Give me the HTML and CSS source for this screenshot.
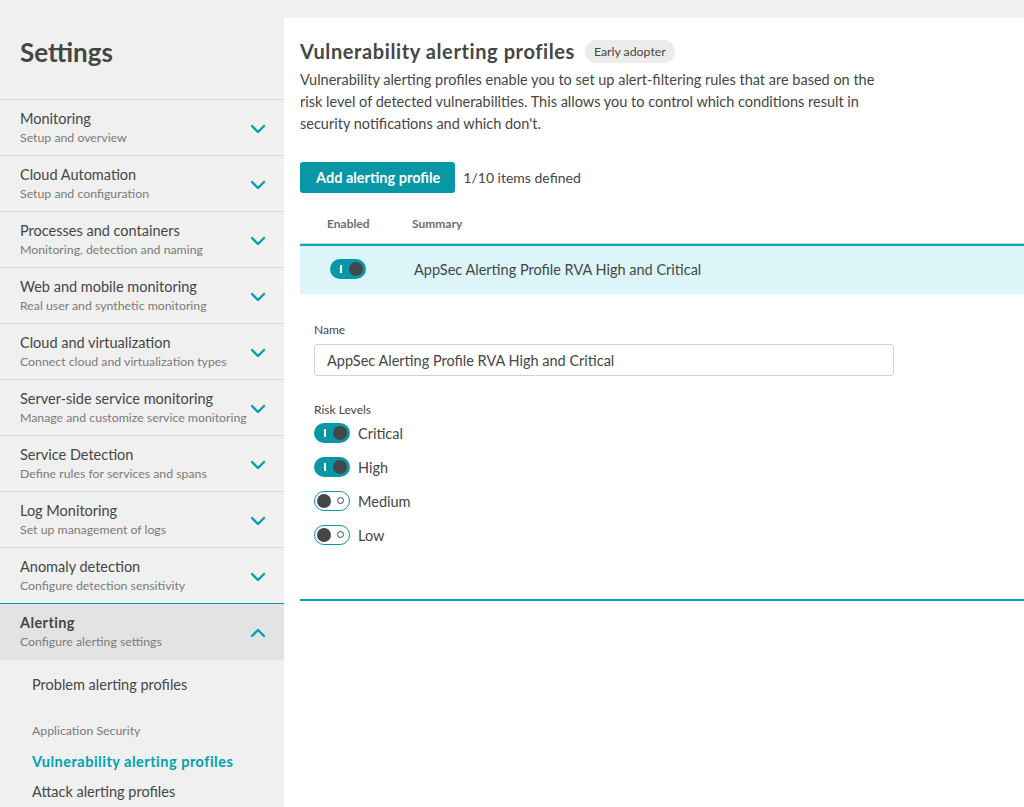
FILE: index.html
```html
<!DOCTYPE html>
<html>
<head>
<meta charset="utf-8">
<link rel="stylesheet" href="styles.css">
</head>
<body>
<div class="app">
  <aside class="sidebar">
    <h1 class="side-title">Settings</h1>
    <nav class="nav">
      <div class="nav-item"><div class="nav-text"><div class="nav-name">Monitoring</div><div class="nav-sub">Setup and overview</div></div><svg class="chev" viewBox="0 0 16 10"><path d="M2 2 L8 8 L14 2"/></svg></div>
      <div class="nav-item"><div class="nav-text"><div class="nav-name">Cloud Automation</div><div class="nav-sub">Setup and configuration</div></div><svg class="chev" viewBox="0 0 16 10"><path d="M2 2 L8 8 L14 2"/></svg></div>
      <div class="nav-item"><div class="nav-text"><div class="nav-name">Processes and containers</div><div class="nav-sub">Monitoring, detection and naming</div></div><svg class="chev" viewBox="0 0 16 10"><path d="M2 2 L8 8 L14 2"/></svg></div>
      <div class="nav-item"><div class="nav-text"><div class="nav-name">Web and mobile monitoring</div><div class="nav-sub">Real user and synthetic monitoring</div></div><svg class="chev" viewBox="0 0 16 10"><path d="M2 2 L8 8 L14 2"/></svg></div>
      <div class="nav-item"><div class="nav-text"><div class="nav-name">Cloud and virtualization</div><div class="nav-sub">Connect cloud and virtualization types</div></div><svg class="chev" viewBox="0 0 16 10"><path d="M2 2 L8 8 L14 2"/></svg></div>
      <div class="nav-item"><div class="nav-text"><div class="nav-name">Server-side service monitoring</div><div class="nav-sub">Manage and customize service monitoring</div></div><svg class="chev" viewBox="0 0 16 10"><path d="M2 2 L8 8 L14 2"/></svg></div>
      <div class="nav-item"><div class="nav-text"><div class="nav-name">Service Detection</div><div class="nav-sub">Define rules for services and spans</div></div><svg class="chev" viewBox="0 0 16 10"><path d="M2 2 L8 8 L14 2"/></svg></div>
      <div class="nav-item"><div class="nav-text"><div class="nav-name">Log Monitoring</div><div class="nav-sub">Set up management of logs</div></div><svg class="chev" viewBox="0 0 16 10"><path d="M2 2 L8 8 L14 2"/></svg></div>
      <div class="nav-item before-active"><div class="nav-text"><div class="nav-name">Anomaly detection</div><div class="nav-sub">Configure detection sensitivity</div></div><svg class="chev" viewBox="0 0 16 10"><path d="M2 2 L8 8 L14 2"/></svg></div>
      <div class="nav-item active"><div class="nav-text"><div class="nav-name">Alerting</div><div class="nav-sub">Configure alerting settings</div></div><svg class="chev" viewBox="0 0 16 10"><path d="M2 8 L8 2 L14 8"/></svg></div>
      <div class="subnav">
        <div class="sub-link">Problem alerting profiles</div>
        <div class="sub-group">Application Security</div>
        <div class="sub-link current">Vulnerability alerting profiles</div>
        <div class="sub-link">Attack alerting profiles</div>
      </div>
    </nav>
  </aside>
  <main class="main">
    <div class="head">
      <h2 class="page-title">Vulnerability alerting profiles</h2>
      <span class="badge">Early adopter</span>
    </div>
    <p class="desc">Vulnerability alerting profiles enable you to set up alert-filtering rules that are based on the risk level of detected vulnerabilities. This allows you to control which conditions result in security notifications and which don't.</p>
    <div class="actions">
      <button class="btn">Add alerting profile</button>
      <span class="count">1/10 items defined</span>
    </div>
    <div class="table">
      <div class="thead">
        <div class="th th-enabled">Enabled</div>
        <div class="th">Summary</div>
      </div>
      <div class="row">
        <div class="cell-enabled"><span class="toggle on"><span class="bar"></span><span class="knob"></span></span></div>
        <div class="cell-summary">AppSec Alerting Profile RVA High and Critical</div>
      </div>
      <div class="details">
        <label class="field-label">Name</label>
        <div class="input">AppSec Alerting Profile RVA High and Critical</div>
        <div class="field-label risk-label">Risk Levels</div>
        <div class="risk-list">
          <div class="risk"><span class="toggle on"><span class="bar"></span><span class="knob"></span></span><span class="risk-name">Critical</span></div>
          <div class="risk"><span class="toggle on"><span class="bar"></span><span class="knob"></span></span><span class="risk-name">High</span></div>
          <div class="risk"><span class="toggle off"><span class="knob"></span><span class="ring"></span></span><span class="risk-name">Medium</span></div>
          <div class="risk"><span class="toggle off"><span class="knob"></span><span class="ring"></span></span><span class="risk-name">Low</span></div>
        </div>
      </div>
    </div>
  </main>
</div>
</body>
</html>
```
FILE: styles.css
```css
* { box-sizing: border-box; }
html, body { margin: 0; padding: 0; }
body {
  background: #f0f0f0;
  font-family: Lato, "Liberation Sans", sans-serif;
  color: #454646;
  width: 1024px;
  height: 807px;
  overflow: hidden;
}
.app { display: flex; height: 807px; }
.sidebar { width: 284px; flex: none; }
.side-title {
  margin: 0;
  font-size: 26px;
  font-weight: 700;
  color: #454646;
  padding: 36px 20px 0 20px;
  height: 99px;
  line-height: 32px;
}
.nav { border-top: 1px solid #dadada; }
.nav-item {
  height: 56px;
  border-bottom: 1px solid #dadada;
  display: flex;
  align-items: center;
  justify-content: space-between;
  padding: 0 18px 0 20px;
}
.nav-item.before-active { border-bottom: 1px solid #1496a6; }
.nav-item.active { background: #e3e3e3; border-bottom: none; }
.nav-text { display: flex; flex-direction: column; padding-top: 1px; }
.nav-name { font-size: 14.5px; line-height: 20px; color: #454646; }
.nav-item.active .nav-name { font-weight: 700; letter-spacing: 0.4px; margin-top: -1px; }
.nav-sub { font-size: 12.3px; line-height: 18px; color: #7b7b7b; }
.chev { width: 16px; height: 10px; flex: none; margin-top: 2px; }
.chev path { fill: none; stroke: #00a1b2; stroke-width: 2.4; stroke-linecap: round; stroke-linejoin: round; }
.subnav { padding: 15px 0 0 32px; }
.sub-link { font-size: 14.5px; line-height: 20px; color: #454646; }
.sub-link + .sub-group { margin-top: 27px; }
.sub-group { font-size: 12.3px; line-height: 18px; color: #7b7b7b; margin-bottom: 12px; }
.sub-link.current { color: #00a1b2; font-weight: 700; letter-spacing: 0.5px; margin-bottom: 10px; }

.main {
  flex: 1;
  background: #fff;
  margin-top: 18px;
  padding: 18px 0 0 16px;
}
.head { display: flex; align-items: center; gap: 10px; height: 30px; }
.page-title { margin: 0; font-size: 20px; font-weight: 700; letter-spacing: 0.6px; color: #454646; }
.badge {
  background: #ececec;
  border-radius: 12px;
  font-size: 12.3px;
  padding: 4px 9px;
  line-height: 15px;
  color: #454646;
}
.desc {
  margin: 3px 0 0 0;
  width: 600px;
  font-size: 14.5px;
  line-height: 22px;
  color: #454646;
}
.actions { display: flex; align-items: center; gap: 8px; margin-top: 27px; }
.btn {
  background: #0797a6;
  color: #fff;
  border: none;
  border-radius: 3px;
  font-family: inherit;
  font-size: 14.5px;
  font-weight: 700;
  height: 31px;
  padding: 0 15px 0 16px;
}
.count { font-size: 14px; }
.table { margin-top: 19px; }
.thead {
  display: flex;
  height: 32px;
  padding-bottom: 8px;
  align-items: center;
  border-bottom: 1px solid #d4d4d4;
}
.th { font-size: 12px; font-weight: 700; color: #6d6d6d; }
.th-enabled { width: 112px; padding-left: 27px; }
.row {
  display: flex;
  align-items: center;
  height: 50px;
  padding-bottom: 2px;
  background: #dcf5f8;
  border-top: 2px solid #00abc0;
}
.cell-enabled { width: 114px; padding-left: 30px; display: flex; }
.cell-summary { font-size: 14.5px; color: #454646; }
.details {
  padding: 29px 0 0 14px;
  height: 307px;
  border-bottom: 2px solid #00abc0;
}
.field-label { display: block; font-size: 12px; line-height: 14px; color: #454646; }
.input {
  margin-top: 7px;
  width: 580px;
  height: 32px;
  border: 1px solid #cfcfcf;
  border-radius: 3px;
  padding: 0 12px;
  display: flex;
  align-items: center;
  font-size: 14.5px;
}
.risk-label { margin-top: 27px; }
.risk-list { display: flex; flex-direction: column; gap: 14px; margin-top: 6px; }
.risk { display: flex; align-items: center; gap: 8px; height: 20px; }
.risk-name { font-size: 14.5px; }

.toggle {
  position: relative;
  display: inline-block;
  width: 36px;
  height: 20px;
  border-radius: 10px;
  flex: none;
}
.toggle.on { background: #0797a6; }
.toggle.off { background: #fff; border: 1.5px solid #0797a6; }
.toggle .knob {
  position: absolute;
  width: 14px;
  height: 14px;
  border-radius: 50%;
  background: #454646;
  top: 3px;
}
.toggle.on .knob { right: 3px; }
.toggle.off .knob { left: 2px; top: 1.5px; }
.toggle .bar {
  position: absolute;
  left: 10px;
  top: 6px;
  width: 1.5px;
  height: 8px;
  background: #fff;
}
.toggle .ring {
  position: absolute;
  right: 5px;
  top: 5px;
  width: 7px;
  height: 7px;
  border-radius: 50%;
  border: 1px solid #454646;
}
```
